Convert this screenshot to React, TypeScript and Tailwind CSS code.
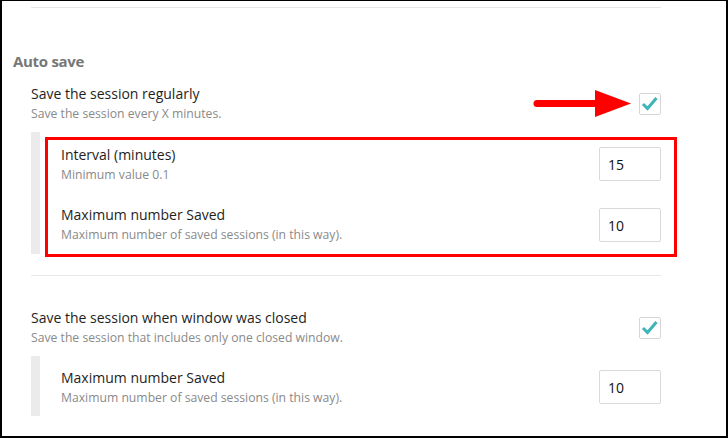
import React from "react";

function Check() {
  return (
    <div className="w-[22px] h-[22px] border border-[#d6d6d6] rounded-[2px] bg-white flex items-center justify-center shrink-0">
      <svg width="20" height="20" viewBox="0 0 20 20">
        <polyline points="3,10 7.5,14.5 16.5,4" fill="none" stroke="#3fb4b6" strokeWidth="3" strokeLinecap="butt" strokeLinejoin="miter" />
      </svg>
    </div>
  );
}

function NumInput({ value }: { value: string }) {
  return (
    <div className="w-[62px] h-[34px] border border-[#d9d9d9] rounded-[2px] bg-white flex items-center pl-[8px] text-[14px] text-[#111] shrink-0">
      {value}
    </div>
  );
}

function Title({ children }: { children: React.ReactNode }) {
  return <div className="text-[14px] leading-[20px] text-[#1e1e1e]">{children}</div>;
}

function Sub({ children }: { children: React.ReactNode }) {
  return <div className="text-[12.2px] leading-[16px] text-[#8a8a8a] mt-[2px]">{children}</div>;
}

export default function App() {
  return (
    <div className="w-[728px] h-[438px] bg-white border-black border-t border-l-2 border-r-2 border-b-2 overflow-hidden relative font-['Open_Sans',sans-serif]">
      <div className="ml-[29px] mt-[6px] w-[630px] h-px bg-[#e8e8e8]" />
      <div className="ml-[11px] mt-[43px] text-[15px] leading-[20px] font-bold tracking-[-0.3px] text-[#777]">Auto save</div>

      <div className="ml-[29px] w-[630px]">
        <div className="mt-[13px] flex justify-between items-start">
          <div>
            <Title>Save the session regularly</Title>
            <Sub>Save the session every X minutes.</Sub>
          </div>
          <div className="mt-[9px]">
            <Check />
          </div>
        </div>

        <div className="mt-[10px] flex h-[122px]">
          <div className="w-[9px] bg-[#ebebeb]" />
          <div className="flex-1 pl-[21px] pt-[13px]">
            <div className="flex justify-between items-start h-[60px]">
              <div>
                <Title>Interval (minutes)</Title>
                <Sub>Minimum value 0.1</Sub>
              </div>
              <div className="mt-[2px]">
                <NumInput value="15" />
              </div>
            </div>
            <div className="flex justify-between items-start">
              <div>
                <Title>Maximum number Saved</Title>
                <Sub>Maximum number of saved sessions (in this way).</Sub>
              </div>
              <div className="mt-[3px]">
                <NumInput value="10" />
              </div>
            </div>
          </div>
        </div>

        <div className="mt-[21px] h-px bg-[#e8e8e8]" />

        <div className="mt-[32px] flex justify-between items-start">
          <div>
            <Title>Save the session when window was closed</Title>
            <Sub>Save the session that includes only one closed window.</Sub>
          </div>
          <div className="mt-[9px]">
            <Check />
          </div>
        </div>

        <div className="mt-[10px] flex h-[60px]">
          <div className="w-[9px] bg-[#ebebeb]" />
          <div className="flex-1 pl-[21px] pt-[12px]">
            <div className="flex justify-between items-start">
              <div>
                <Title>Maximum number Saved</Title>
                <Sub>Maximum number of saved sessions (in this way).</Sub>
              </div>
              <div className="mt-[2px]">
                <NumInput value="10" />
              </div>
            </div>
          </div>
        </div>
      </div>

      <div className="absolute left-[43px] top-[136px] w-[632px] h-[120px] border-[3px] border-[#ff0000] pointer-events-none" />
      <svg className="absolute left-[-2px] top-[-1px] pointer-events-none" width="728" height="438" viewBox="0 0 728 438">
        <line x1="537" y1="103.5" x2="600" y2="103.5" stroke="#ff0000" strokeWidth="7" strokeLinecap="round" />
        <polygon points="595,90 631,103.5 595,117" fill="#ff0000" />
      </svg>
    </div>
  );
}
